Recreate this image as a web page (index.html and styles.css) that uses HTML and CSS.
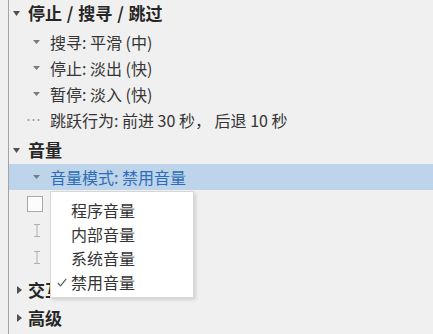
FILE: index.html
```html
<!DOCTYPE html>
<html lang="zh-CN">
<head>
<meta charset="utf-8">
<link rel="stylesheet" href="styles.css">
</head>
<body>
<div class="tree">
  <div class="node head">
    <svg class="tri-down" width="7" height="5" viewBox="0 0 7 5"><path d="M0 0H7L3.5 5Z"/></svg>
    <span class="label bold">停止 / 搜寻 / 跳过</span>
  </div>
  <div class="group g1">
    <div class="node child">
      <svg class="tri-small" width="7" height="4" viewBox="0 0 7 4"><path d="M0 0H7L3.5 4Z"/></svg>
      <span class="label">搜寻: 平滑 (中)</span>
    </div>
    <div class="node child">
      <svg class="tri-small" width="7" height="4" viewBox="0 0 7 4"><path d="M0 0H7L3.5 4Z"/></svg>
      <span class="label">停止: 淡出 (快)</span>
    </div>
    <div class="node child">
      <svg class="tri-small" width="7" height="4" viewBox="0 0 7 4"><path d="M0 0H7L3.5 4Z"/></svg>
      <span class="label">暂停: 淡入 (快)</span>
    </div>
    <div class="node child dotted">
      <svg class="dots" width="14" height="4" viewBox="0 0 14 4"><circle cx="1.5" cy="2" r="1.1"/><circle cx="6.5" cy="2" r="1.1"/><circle cx="11.5" cy="2" r="1.1"/></svg>
      <span class="label">跳跃行为: 前进 30 秒，&nbsp;后退 10 秒</span>
    </div>
  </div>

  <div class="node head h2">
    <svg class="tri-down" width="7" height="5" viewBox="0 0 7 5"><path d="M0 0H7L3.5 5Z"/></svg>
    <span class="label bold">音量</span>
  </div>
  <div class="group g2">
    <div class="node child selected">
      <svg class="tri-small" width="7" height="4" viewBox="0 0 7 4"><path d="M0 0H7L3.5 4Z"/></svg>
      <span class="label">音量模式: 禁用音量</span>
    </div>
    <div class="node child tall">
      <span class="checkbox"></span>
    </div>
    <div class="node child tall">
      <svg class="ibeam" width="8" height="13" viewBox="0 0 8 13"><path d="M1 0.5H7M4 0.5V12.5M1 12.5H7" fill="none" stroke="#b0b0b0" stroke-width="1"/></svg>
    </div>
    <div class="node child tall">
      <svg class="ibeam" width="8" height="13" viewBox="0 0 8 13"><path d="M1 0.5H7M4 0.5V12.5M1 12.5H7" fill="none" stroke="#b0b0b0" stroke-width="1"/></svg>
    </div>
  </div>

  <div class="node head h3">
    <svg class="tri-right" width="5" height="8" viewBox="0 0 5 8"><path d="M0 0V8L5 4Z"/></svg>
    <span class="label bold">交互</span>
  </div>
  <div class="node head h4">
    <svg class="tri-right" width="5" height="8" viewBox="0 0 5 8"><path d="M0 0V8L5 4Z"/></svg>
    <span class="label bold">高级</span>
  </div>

  <div class="menu">
    <div class="item"><span class="check"></span>程序音量</div>
    <div class="item"><span class="check"></span>内部音量</div>
    <div class="item"><span class="check"></span>系统音量</div>
    <div class="item"><span class="check"><svg width="10" height="9" viewBox="0 0 10 9"><path d="M0.8 5L3.5 7.8L9.2 0.8" fill="none" stroke="#555" stroke-width="1.1"/></svg></span>禁用音量</div>
  </div>
</div>
</body>
</html>
```

FILE: styles.css
```css
* { box-sizing: border-box; }
html, body {
  margin: 0;
  padding: 0;
  width: 433px;
  height: 334px;
  overflow: hidden;
  background: #f0f0f0;
}
body {
  font-family: "Noto Sans CJK SC", "Noto Sans", sans-serif;
  font-size: 16px;
  color: #353535;
}
.tree {
  position: relative;
  margin-left: 8px;
  height: 334px;
  border-left: 1px solid #a4a4a4;
}
.node {
  display: flex;
  align-items: center;
  height: 26px;
  line-height: 26px;
  white-space: nowrap;
}
.head {
  padding-left: 4px;
}
.head .label {
  font-size: 17px;
  font-weight: bold;
  color: #262626;
  word-spacing: 1px;
}
.tri-down {
  fill: #505050;
  margin-right: 8px;
}
.tri-right {
  fill: #505050;
  margin-left: 4px;
  margin-right: 6px;
}
.child {
  padding-left: 24px;
}
.tri-small {
  fill: #7a7a7a;
  margin-right: 10px;
}
.dots {
  fill: #9a9a9a;
  margin-left: -6px;
  margin-right: 9px;
}
.g1 { padding-top: 3px; }
.h2 { margin-top: 4px; }
.g2 { padding-top: 1px; }
.selected {
  background: #bed4ea;
}
.selected .label {
  color: #2e6db5;
}
.tall { height: 27px; }
.checkbox {
  width: 16px;
  height: 16px;
  margin-left: -6px;
  border: 1px solid #a8a8a8;
  background: #fcfcfc;
}
.ibeam {
  margin-left: 0;
}
.h3 { margin-top: 6px; }
.h4 { margin-top: 2px; }

.menu {
  position: absolute;
  left: 41px;
  top: 191px;
  width: 144px;
  height: 107px;
  padding-top: 6px;
  background: #ffffff;
  border: 1px solid #d6d6d6;
  box-shadow: 2px 2px 3px rgba(0, 0, 0, 0.12);
}
.item {
  display: flex;
  align-items: center;
  height: 24px;
  line-height: 24px;
  color: #353535;
}
.check {
  display: flex;
  align-items: center;
  width: 20px;
  padding-left: 6px;
}
```
